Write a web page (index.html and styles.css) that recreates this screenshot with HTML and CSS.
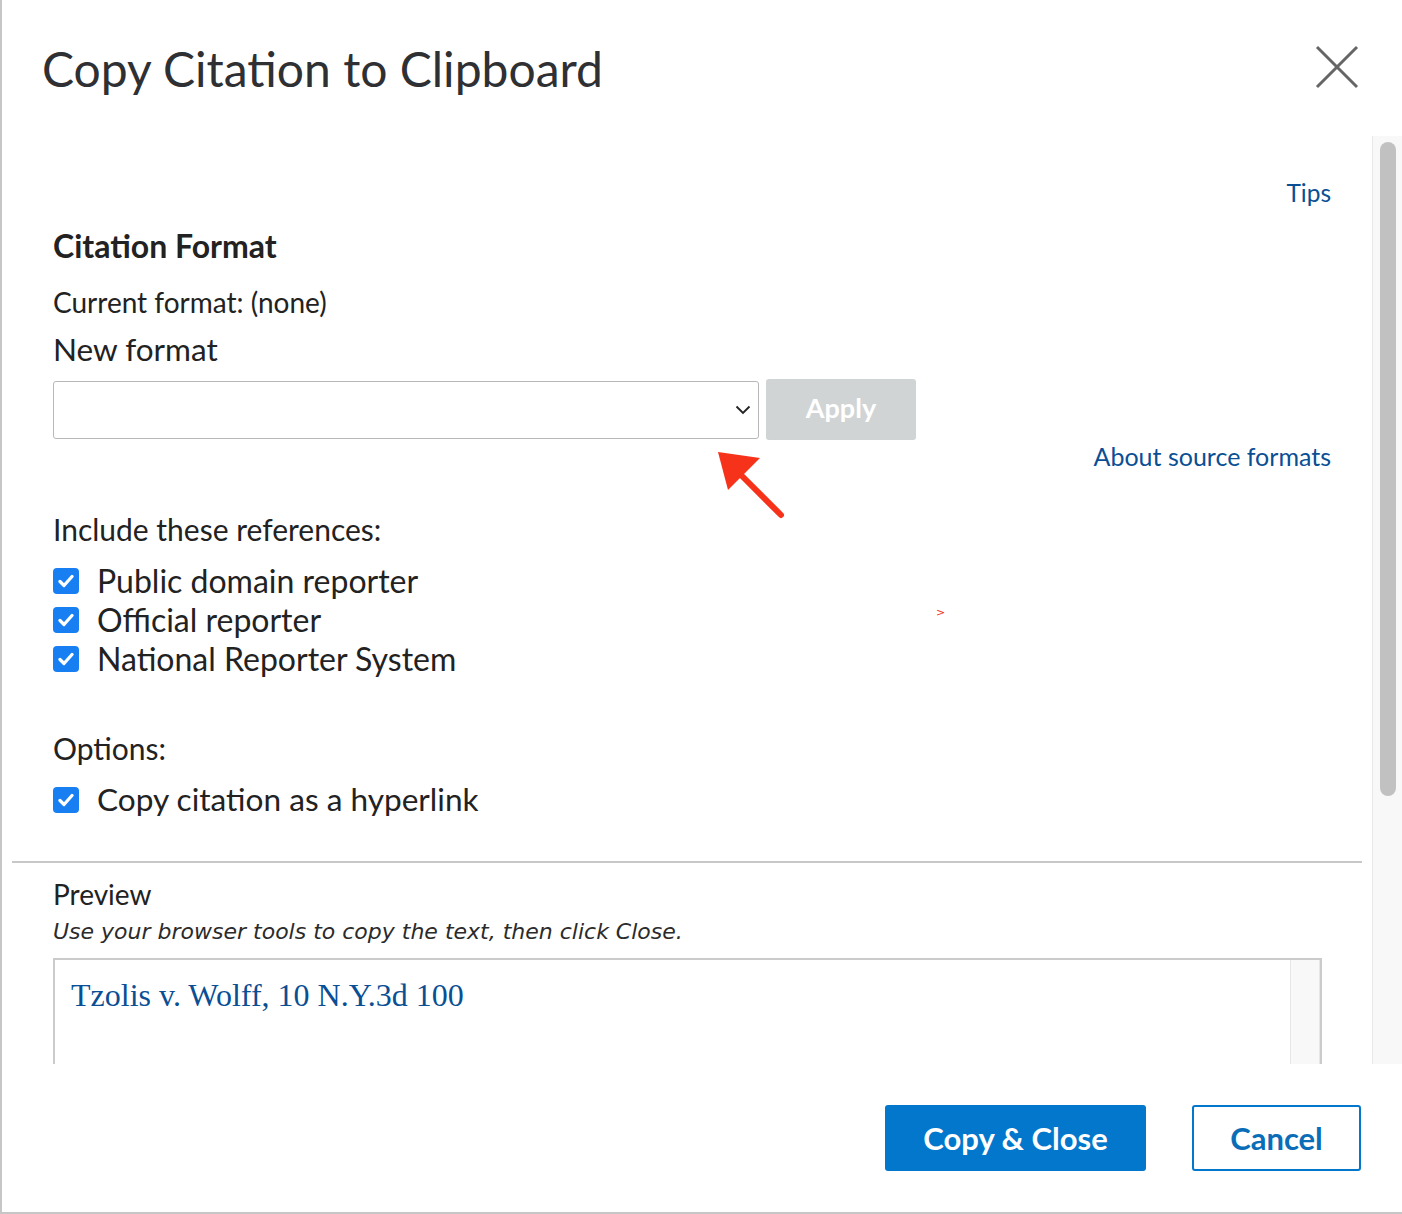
FILE: index.html
```html
<!DOCTYPE html>
<html lang="en">
<head>
<meta charset="utf-8">
<title>Copy Citation to Clipboard</title>
<link rel="stylesheet" href="styles.css">
</head>
<body>
<div class="dialog">
  <header class="dialog-header">
    <h1 class="dialog-title">Copy Citation to Clipboard</h1>
    <button class="close-btn" aria-label="Close">
      <svg width="44" height="44" viewBox="0 0 44 44"><path d="M2 2 L42 42 M42 2 L2 42" stroke="#666" stroke-width="3" fill="none"/></svg>
    </button>
  </header>

  <div class="dialog-body">
    <div class="scroll-content">
      <div class="format-section">
        <div class="right-link"><a href="#" class="link">Tips</a></div>
        <h2 class="section-title">Citation Format</h2>
        <div class="current">Current format: (none)</div>
        <div class="label new-format">New format</div>
        <div class="format-row">
          <div class="select">
            <svg class="chevron" width="16" height="10" viewBox="0 0 16 10"><path d="M1.5 1.5 L8 8 L14.5 1.5" stroke="#222" stroke-width="1.8" fill="none"/></svg>
          </div>
          <button class="apply-btn">Apply</button>
        </div>
        <div class="right-link about"><a href="#" class="link">About source formats</a></div>

        <div class="label include">Include these references:</div>
        <ul class="checks">
          <li class="check"><span class="box"><svg width="16" height="14" viewBox="0 0 16 14"><path d="M2 7.5 L6 11.5 L14 2.5" stroke="#fff" stroke-width="3.2" fill="none" stroke-linecap="round" stroke-linejoin="round"/></svg></span>Public domain reporter</li>
          <li class="check"><span class="box"><svg width="16" height="14" viewBox="0 0 16 14"><path d="M2 7.5 L6 11.5 L14 2.5" stroke="#fff" stroke-width="3.2" fill="none" stroke-linecap="round" stroke-linejoin="round"/></svg></span>Official reporter</li>
          <li class="check"><span class="box"><svg width="16" height="14" viewBox="0 0 16 14"><path d="M2 7.5 L6 11.5 L14 2.5" stroke="#fff" stroke-width="3.2" fill="none" stroke-linecap="round" stroke-linejoin="round"/></svg></span>National Reporter System</li>
        </ul>

        <div class="label options">Options:</div>
        <ul class="checks">
          <li class="check hyperlink"><span class="box"><svg width="16" height="14" viewBox="0 0 16 14"><path d="M2 7.5 L6 11.5 L14 2.5" stroke="#fff" stroke-width="3.2" fill="none" stroke-linecap="round" stroke-linejoin="round"/></svg></span>Copy citation as a hyperlink</li>
        </ul>
      </div>

      <hr class="divider">

      <div class="preview-section">
        <div class="preview-title">Preview</div>
        <div class="preview-hint">Use your browser tools to copy the text, then click Close.</div>
        <div class="preview-box">
          <div class="preview-text">Tzolis v. Wolff, 10 N.Y.3d 100</div>
          <div class="preview-track"></div>
        </div>
      </div>
    </div>
    <div class="scrollbar"><div class="thumb"></div></div>
  </div>

  <footer class="dialog-footer">
    <button class="btn-primary">Copy &amp; Close</button>
    <button class="btn-secondary">Cancel</button>
  </footer>

  <svg class="annot-arrow" width="80" height="80" viewBox="710 444 80 80">
    <polygon points="718,452 760,458 749,469 738,480 728,490" fill="#f6331a"/>
    <line x1="742" y1="476" x2="781" y2="515" stroke="#f6331a" stroke-width="6" stroke-linecap="round"/>
  </svg>
  <span class="annot-mark">&gt;</span>
</div>
</body>
</html>
```

FILE: styles.css
```css
* { box-sizing: border-box; }
html, body { margin: 0; padding: 0; background: #fff; }
body { font-family: "Lato", "Liberation Sans", sans-serif; color: #222; }

.dialog {
  position: relative;
  width: 1402px;
  height: 1214px;
  border-left: 2px solid #c6c6c6;
  border-bottom: 2px solid #c6c6c6;
  display: flex;
  flex-direction: column;
  overflow: hidden;
}

.dialog-header {
  height: 136px;
  flex: none;
  display: flex;
  align-items: flex-start;
  justify-content: space-between;
  padding: 40px 43px 0 40px;
}
.dialog-title {
  margin: 0;
  font-size: 48px;
  line-height: 58px;
  font-weight: 400;
  color: #2f3033;
}
.close-btn {
  margin-top: 5px;
  padding: 0;
  border: 0;
  background: none;
  width: 44px;
  height: 44px;
}
.close-btn svg { display: block; }

.dialog-body {
  height: 928px;
  flex: none;
  display: flex;
}
.scroll-content {
  flex: 1;
  overflow: hidden;
}
.scrollbar {
  width: 30px;
  flex: none;
  background: #f8f8f8;
  border-left: 1px solid #e8e8e8;
  padding: 6px 0 0 7px;
}
.thumb {
  width: 16px;
  height: 654px;
  background: #c1c1c1;
  border-radius: 8px;
}

.format-section {
  padding: 42px 41px 0 51px;
}
.right-link {
  text-align: right;
  font-size: 24.5px;
  line-height: 30px;
}
.link { color: #0a4f94; text-decoration: none; }
.about .link { font-size: 25px; }
.section-title {
  margin: 20px 0 0;
  font-size: 32px;
  line-height: 36px;
  font-weight: 700;
  color: #222;
}
.current {
  margin-top: 22px;
  font-size: 28px;
  line-height: 32px;
}
.label {
  margin-top: 14px;
  font-size: 30px;
  line-height: 34px;
}
.new-format { font-size: 31.5px; }
.format-row {
  margin-top: 13px;
  display: flex;
  align-items: center;
  gap: 7px;
  height: 61px;
}
.select {
  width: 706px;
  height: 58px;
  border: 1.5px solid #b8b8b8;
  border-radius: 3px;
  background: #fff;
  display: flex;
  align-items: center;
  justify-content: flex-end;
  padding-right: 7px;
}
.chevron { display: block; }
.apply-btn {
  width: 150px;
  height: 61px;
  border: 0;
  border-radius: 3px;
  background: #d1d4d5;
  color: #fff;
  font-family: "Lato", sans-serif;
  font-size: 27px;
  line-height: 57px;
  font-weight: 700;
  padding: 0 0 4px;
}
.about { margin-top: 1px; }
.include { margin-top: 40px; }
.options { margin-top: 53px; }

.checks {
  list-style: none;
  margin: 15px 0 0;
  padding: 0;
}
.check {
  display: flex;
  align-items: center;
  height: 39px;
  font-size: 32px;
  line-height: 39px;
  color: #222;
}
.hyperlink { font-size: 31.6px; }
.box {
  width: 26px;
  height: 26px;
  border-radius: 4px;
  background: #187ff2;
  display: flex;
  align-items: center;
  justify-content: center;
  margin-right: 18px;
  flex: none;
}
.box svg { display: block; }

.divider {
  margin: 42px 10px 0;
  border: 0;
  height: 2px;
  background: #c8c8c8;
}

.preview-section {
  padding: 15px 50px 0 51px;
}
.preview-title {
  font-size: 28px;
  line-height: 32px;
  color: #222;
}
.preview-hint {
  margin-top: 9px;
  font-family: "DejaVu Sans", Verdana, sans-serif;
  font-style: italic;
  font-size: 22px;
  line-height: 26px;
  color: #2b2b2b;
}
.preview-box {
  margin-top: 13px;
  height: 160px;
  border: 2px solid #cbcbcb;
  display: flex;
}
.preview-text {
  flex: 1;
  padding: 15px 16px;
  font-family: "Liberation Serif", "Times New Roman", serif;
  font-size: 32px;
  line-height: 40px;
  color: #0a4f94;
}
.preview-track {
  width: 30px;
  flex: none;
  background: #f8f8f8;
  border-left: 1px solid #e6e6e6;
  border-right: 1px solid #e6e6e6;
}

.dialog-footer {
  flex: 1;
  display: flex;
  justify-content: flex-end;
  align-items: flex-start;
  gap: 46px;
  padding: 41px 41px 0 0;
}
.btn-primary, .btn-secondary {
  height: 66px;
  border-radius: 3px;
  font-family: "Lato", sans-serif;
  font-size: 31px;
  font-weight: 700;
  padding: 0;
}
.btn-primary {
  width: 261px;
  border: 0;
  background: #0277cc;
  color: #fff;
}
.btn-secondary {
  width: 169px;
  border: 2px solid #0277cc;
  background: #fff;
  color: #0b6db8;
}

.annot-arrow {
  position: absolute;
  left: 708px;
  top: 444px;
}
.annot-mark {
  position: absolute;
  left: 934px;
  top: 605px;
  font-family: "DejaVu Sans", sans-serif;
  font-size: 11px;
  line-height: 16px;
  color: #f6331a;
}
```
